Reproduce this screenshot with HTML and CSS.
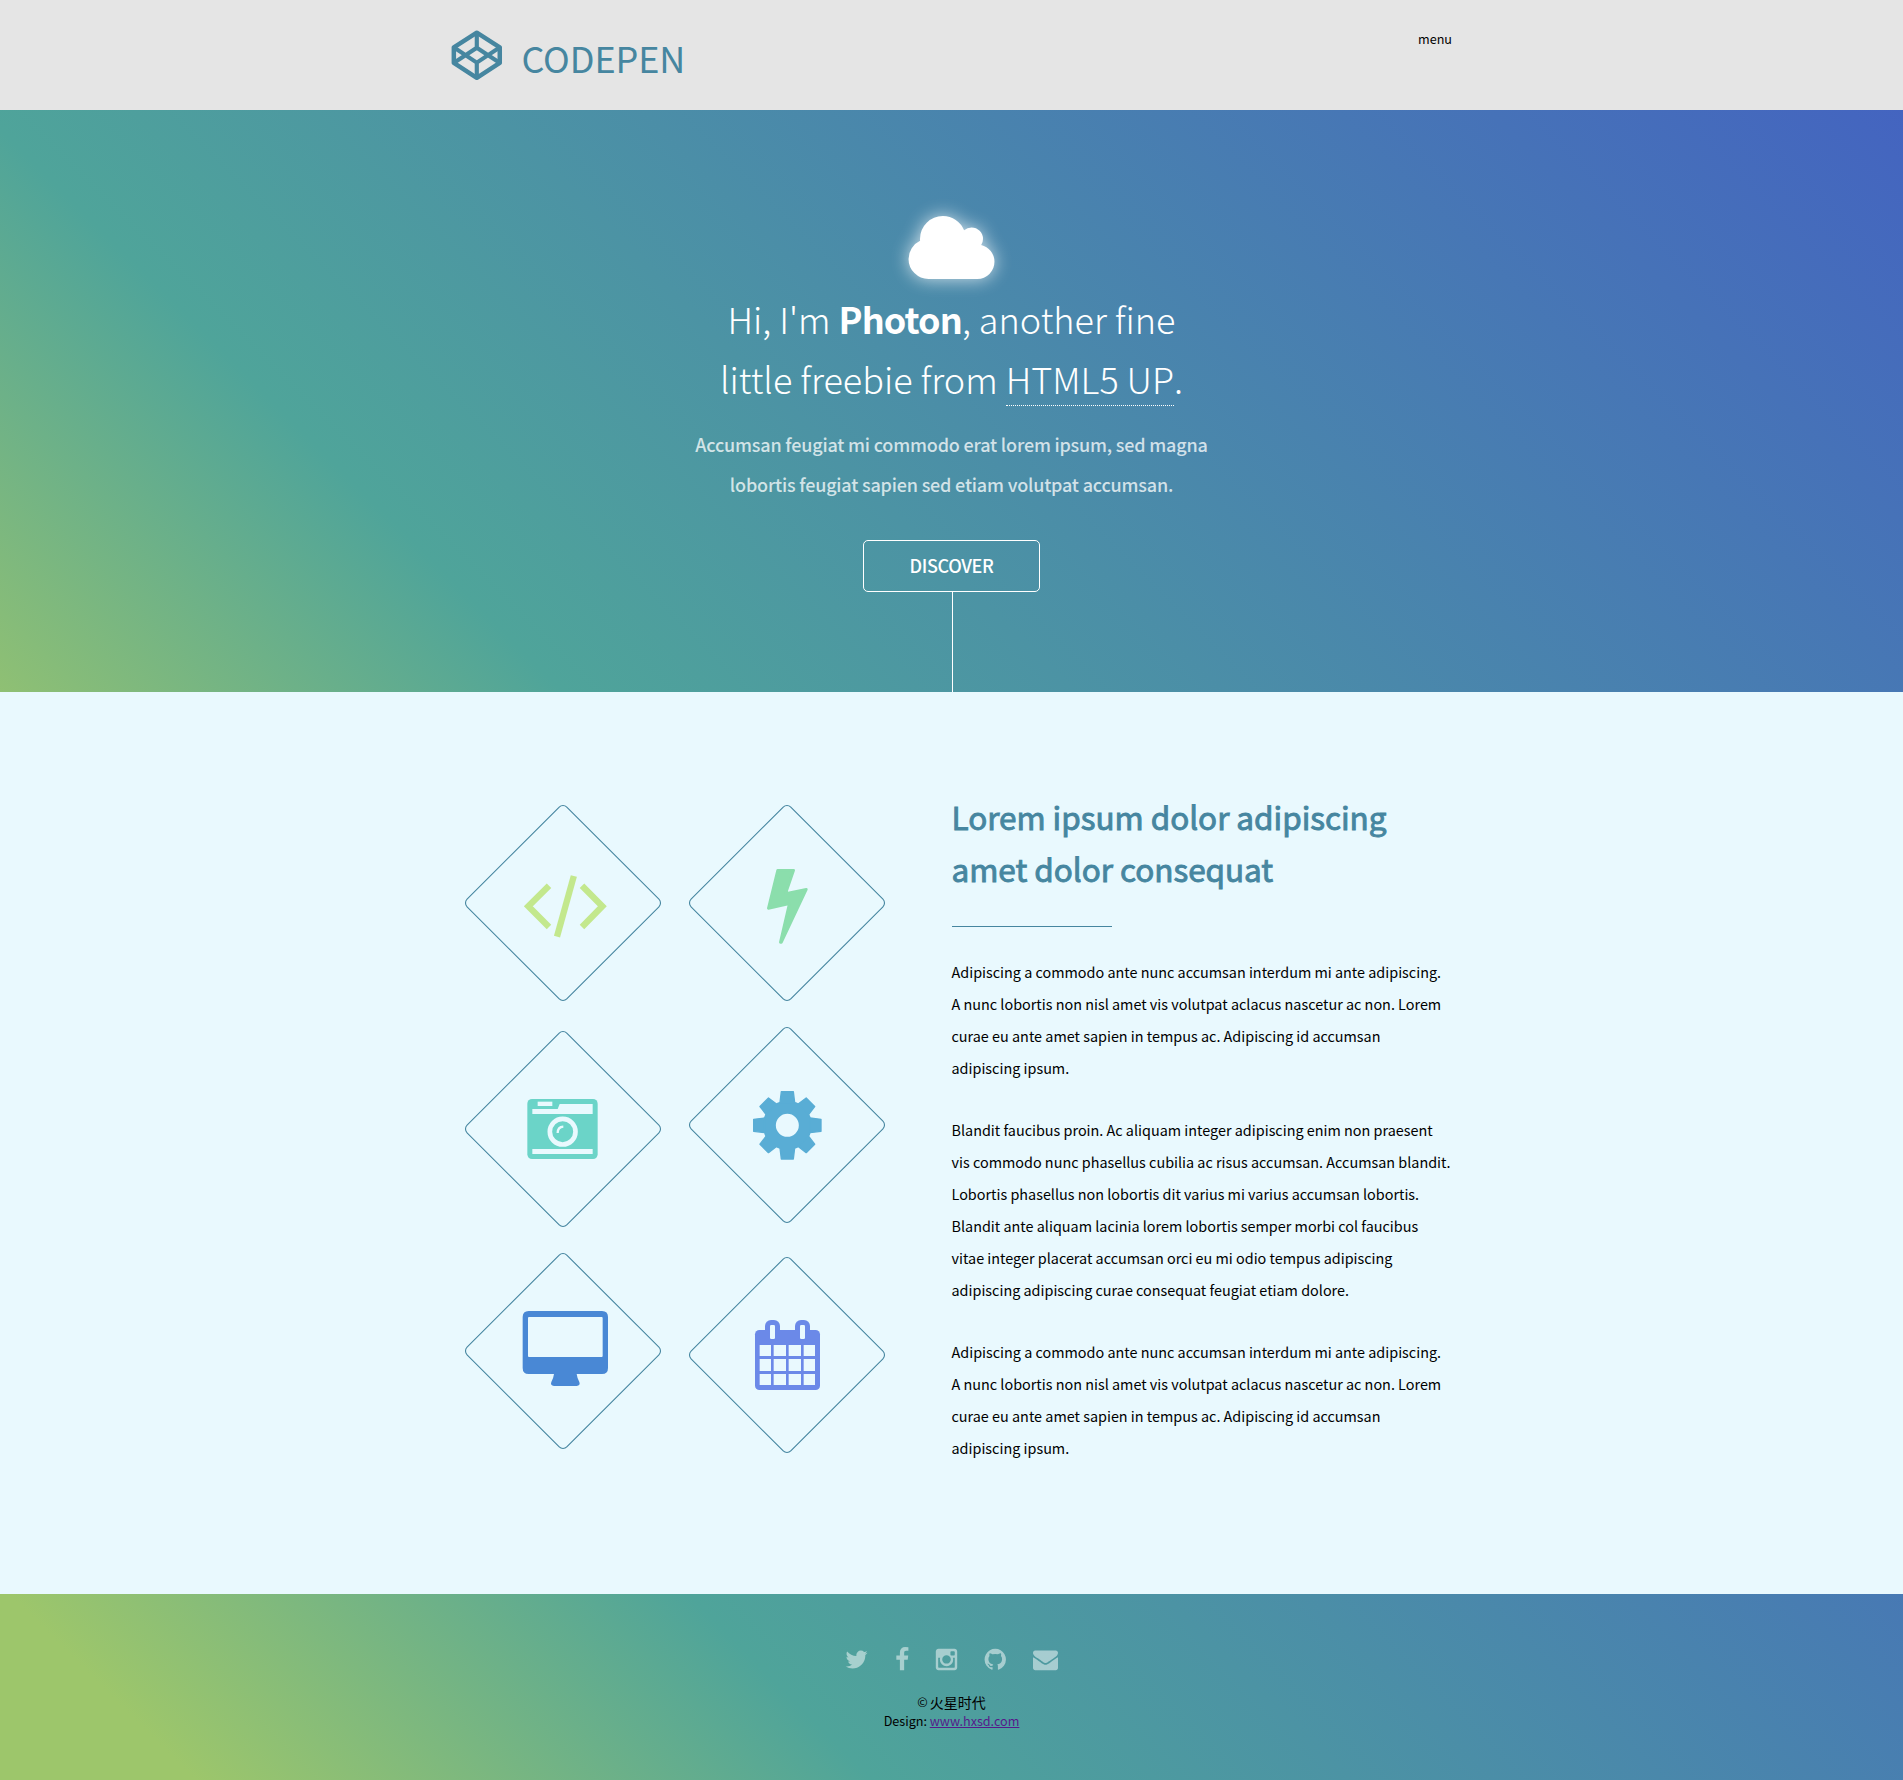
FILE: index.html
```html
<!DOCTYPE html>
<html lang="en">
<head>
<meta charset="utf-8">
<title>Photon</title>
<link rel="stylesheet" href="styles.css">
</head>
<body>
<header class="header">
  <div class="wrap header-row">
    <a class="brand">
      <svg class="brand-mark" viewBox="62 59 155 152"><g fill="none" stroke="currentColor" stroke-width="13.500" stroke-linejoin="round"><path d="M139.500 67 L208.500 111 V158 L139.500 202.500 L70.500 158 V111 Z"/><path stroke-width="12.500" d="M70 111 L139.500 157 L209 111 M70 158 L139.500 112 L209 158 M139.500 67 V112 M139.500 157 V202"/></g></svg>
      <span class="brand-name">CODEPEN</span>
    </a>
    <span class="menu">menu</span>
  </div>
</header>

<section class="hero">
  <svg class="cloud" viewBox="64 128 1920 1408"><path fill="#fff" d="M1984 1152q0 159-112.500 271.500t-271.500 112.500h-1088q-185 0-316.500-131.500t-131.500-316.500q0-132 71-241.500t187-163.500q-2-28-2-43 0-212 150-362t362-150q158 0 286.500 88t187.500 230q70-62 166-62 106 0 181 75t75 181q0 75-41 138 129 30 213 134.500t84 239.500z"/></svg>
  <h1 class="hero-title">Hi, I'm <strong>Photon</strong>, another fine<br>little freebie from <a class="dotted">HTML5 UP</a>.</h1>
  <p class="hero-text">Accumsan feugiat mi commodo erat lorem ipsum, sed magna<br>lobortis feugiat sapien sed etiam volutpat accumsan.</p>
  <a class="button"><span>DISCOVER</span></a>
  <div class="stem"></div>
</section>

<main class="main">
  <div class="wrap columns">
    <div class="tiles">
      <div class="tile-col">
        <svg class="tile" viewBox="3 6 672 666">
          <rect class="diamond" x="127.500" y="127.500" width="423" height="423" rx="16" transform="rotate(45 339 339)"/>
          <g fill="none" stroke="#c3e88d" stroke-width="19"><path d="M297 287 L235 349 L297 411"/><path d="M396 287 L457 349 L396 411"/><path d="M371.500 258 L321 440"/></g>
        </svg>
        <svg class="tile tile-gap-s" viewBox="3 -6 672 666">
          <rect class="diamond" x="127.500" y="115.500" width="423" height="423" rx="16" transform="rotate(45 339 327)"/>
          <rect x="232" y="237" width="211" height="180" rx="14" fill="#6bd4c8"/>
          <g fill="#e9f9fe"><rect x="263" y="245" width="44" height="13"/><path d="M247 267 H323 L329 252 H428 V282 H247 Z"/><rect x="247" y="387" width="181" height="15"/></g>
          <circle cx="338" cy="335" r="38.500" fill="none" stroke="#e9f9fe" stroke-width="14"/>
          <path d="M323 339 Q323 321 340 320" fill="none" stroke="#e9f9fe" stroke-width="7"/>
        </svg>
        <svg class="tile" viewBox="3 0 672 666">
          <rect class="diamond" x="127.500" y="121.500" width="423" height="423" rx="16" transform="rotate(45 339 333)"/>
          <path fill="#4988d5" fill-rule="evenodd" d="M236 213 H456 Q474 213 474 231 V384 Q474 402 456 402 H380 Q381 412 388 426 Q392 437 380 438 H312 Q300 437 304 426 Q311 412 312 402 H236 Q218 402 218 384 V231 Q218 213 236 213 Z M237 231 Q234 231 234 234 V348 Q234 351 237 351 H455 Q458 351 458 348 V234 Q458 231 455 231 Z"/>
        </svg>
      </div>
      <div class="tile-col">
        <svg class="tile" viewBox="675 6 672 666">
          <rect class="diamond" x="799.500" y="127.500" width="423" height="423" rx="16" transform="rotate(45 1011 339)"/>
          <path fill="#8bdeac" stroke="#8bdeac" stroke-width="8" stroke-linejoin="round" d="M983 241 H1031 L1007 311 L1069 298 L994 457 L991 457 L1018 341 L955 355 Z"/>
        </svg>
        <svg class="tile" viewBox="675 -18 672 666">
          <rect class="diamond" x="799.500" y="103.500" width="423" height="423" rx="16" transform="rotate(45 1011 315)"/>
          <g transform="translate(1012 316)" fill="#59add5" stroke="#59add5" stroke-width="4" stroke-linejoin="round">
            <circle r="54" fill="none" stroke-width="39"/>
            <path d="M-18 -101 H18 L22 -68 H-22 Z M-18 101 H18 L22 68 H-22 Z M-101 -18 V18 L-68 22 V-22 Z M101 -18 V18 L68 22 V-22 Z"/>
            <path transform="rotate(45)" d="M-18 -98 H18 L22 -68 H-22 Z M-18 98 H18 L22 68 H-22 Z M-98 -18 V18 L-68 22 V-22 Z M98 -18 V18 L68 22 V-22 Z"/>
          </g>
        </svg>
        <svg class="tile tile-gap-l" viewBox="675 12 672 666">
          <rect class="diamond" x="799.500" y="133.500" width="423" height="423" rx="16" transform="rotate(45 1011 345)"/>
          <g fill="#6b89e8"><rect x="915" y="270" width="195" height="180" rx="13"/><rect x="945" y="240" width="45" height="66" rx="18"/><rect x="1035" y="240" width="45" height="66" rx="18"/></g>
          <g fill="#e9f9fe"><rect x="960" y="255" width="15" height="42" rx="4"/><rect x="1050" y="255" width="15" height="42" rx="4"/>
          <path d="M929 315h34v33h-34z M971 315h37v33h-37z M1016 315h37v33h-37z M1061 315h34v33h-34z M929 357h34v36h-34z M971 357h37v36h-37z M1016 357h37v36h-37z M1061 357h34v36h-34z M929 402h34v33h-34z M971 402h37v33h-37z M1016 402h37v33h-37z M1061 402h34v33h-34z"/></g>
        </svg>
      </div>
    </div>
    <article class="copy">
      <h2 class="copy-title">Lorem ipsum dolor adipiscing<br>amet dolor consequat</h2>
      <div class="rule"></div>
      <p>Adipiscing a commodo ante nunc accumsan interdum mi ante adipiscing.<br>A nunc lobortis non nisl amet vis volutpat aclacus nascetur ac non. Lorem<br>curae eu ante amet sapien in tempus ac. Adipiscing id accumsan<br>adipiscing ipsum.</p>
      <p>Blandit faucibus proin. Ac aliquam integer adipiscing enim non praesent<br>vis commodo nunc phasellus cubilia ac risus accumsan. Accumsan blandit.<br>Lobortis phasellus non lobortis dit varius mi varius accumsan lobortis.<br>Blandit ante aliquam lacinia lorem lobortis semper morbi col faucibus<br>vitae integer placerat accumsan orci eu mi odio tempus adipiscing<br>adipiscing adipiscing curae consequat feugiat etiam dolore.</p>
      <p>Adipiscing a commodo ante nunc accumsan interdum mi ante adipiscing.<br>A nunc lobortis non nisl amet vis volutpat aclacus nascetur ac non. Lorem<br>curae eu ante amet sapien in tempus ac. Adipiscing id accumsan<br>adipiscing ipsum.</p>
    </article>
  </div>
</main>

<footer class="footer">
  <div class="social">
    <svg width="23.2" height="25" viewBox="64 0 1664 1792"><path d="M1684 408q-67 98-162 167 1 14 1 42 0 130-38 259.500t-115.500 248.500-184.500 210.500-258 146-323 54.500q-271 0-496-145 35 4 78 4 225 0 401-138-105-2-188-64.500t-114-159.500q33 5 61 5 43 0 85-11-112-23-185.500-111.500t-73.500-205.500v-4q68 38 146 41-66-44-105-115t-39-154q0-88 44-163 121 149 294.500 238.500t371.500 99.500q-8-38-8-74 0-134 94.500-228.500t228.500-94.500q140 0 236 102 109-21 205-78-37 115-142 178 93-10 186-50z"/></svg>
    <svg width="14.3" height="25" viewBox="384 0 1024 1792"><path d="M1343 12v264h-157q-86 0-116 36t-30 108v189h293l-39 296h-254v759h-306v-759h-255v-296h255v-218q0-186 104-288.500t277-102.500q147 0 228 12z"/></svg>
    <svg width="21.4" height="25" viewBox="142 0 1536 1792"><path d="M1490 1426v-648h-135q20 63 20 131 0 126-64 232.500t-174 168.500-240 62q-197 0-337-135.500t-140-327.500q0-68 20-131h-141v648q0 26 17.500 43.500t43.500 17.500h1069q25 0 43-17.500t18-43.500zm-284-533q0-124-90.500-211.500t-218.500-87.500q-127 0-217.500 87.500t-90.500 211.500 90.500 211.500 217.500 87.500q128 0 218.500-87.500t90.500-211.500zm284-360v-165q0-28-20-48.500t-49-20.500h-174q-29 0-49 20.500t-20 48.500v165q0 29 20 49t49 20h174q29 0 49-20t20-49zm174-208v1142q0 81-58 139t-139 58h-1142q-81 0-139-58t-58-139v-1142q0-81 58-139t139-58h1142q81 0 139 58t58 139z"/></svg>
    <svg width="21.4" height="25" viewBox="160 0 1536 1792"><path d="M896 128q209 0 385.500 103t279.500 279.500 103 385.500q0 251-146.500 451.500t-378.500 277.500q-27 5-40-7t-13-30q0-3 .5-76.500t.5-134.500q0-97-52-142 57-6 102.500-18t94-39 81-66.500 53-105 20.500-150.500q0-119-79-206 37-91-8-204-28-9-81 11t-92 44l-38 24q-93-26-192-26t-192 26q-16-11-42.500-27t-83.500-38.500-85-13.500q-45 113-8 204-79 87-79 206 0 85 20.500 150t52.500 105 80.500 67 94 39 102.500 18q-39 36-49 103-21 10-45 15t-57 5-65.500-21.500-55.500-62.500q-19-32-48.500-52t-49.500-24l-20-3q-21 0-29 4.500t-5 11.500 9 14 13 12l7 5q22 10 43.500 38t31.500 51l10 23q13 38 44 61.500t67 30 69.500 7 55.500-3.500l23-4q0 38 .5 88.500t.5 54.500q0 18-13 30t-40 7q-232-77-378.500-277.500t-146.500-451.500q0-209 103-385.500t279.500-279.500 385.500-103z"/></svg>
    <svg width="25" height="25" viewBox="0 0 1792 1792"><path d="M1792 710v794q0 66-47 113t-113 47h-1472q-66 0-113-47t-47-113v-794q44 49 101 87 362 246 497 345 57 42 92.500 65.500t94.500 48 110 24.500h2q51 0 110-24.500t94.500-48 92.500-65.500q170-123 498-345 57-39 100-87zm0-294q0 79-49 151t-122 123q-376 261-468 325-10 7-42.500 31t-54 38.500-52 32.500-57.500 27-50 9h-2q-23 0-50-9t-57.500-27-52-32.500-54-38.500-42.500-31q-91-64-262-182.500t-205-142.500q-62-42-117-115.500t-55-136.500q0-78 41.500-130t118.500-52h1472q65 0 112.500 47t47.500 113z"/></svg>
  </div>
  <p class="legal">© <span class="han">火星时代</span></p>
  <p class="legal">Design: <a class="link">www.hxsd.com</a></p>
</footer>
</body>
</html>
```
FILE: styles.css
```css
* { box-sizing: border-box; margin: 0; padding: 0; }
body { font-family: "Noto Sans CJK SC", "Open Sans", sans-serif; font-size: 14.4px; color: #000; background: #e9f9fe; }
svg { display: block; overflow: visible; }
.wrap { width: 1001px; margin: 0 auto; }

.header { height: 110px; background: #e5e5e5; }
.header-row { display: flex; justify-content: space-between; }
.brand { display: flex; color: #4686a0; }
.brand-mark { width: 51.6px; height: 50.6px; margin: 30px 18.8px 0 0; }
.brand-name { font-size: 36px; line-height: 114px; letter-spacing: -.1px; }
.menu { font-size: 12.6px; line-height: 77px; }

.hero { height: 582px; padding-top: 106px; display: flex; flex-direction: column; align-items: center; text-align: center; color: #fff; background: linear-gradient(45deg, #9dc66b -85px, #4fa49a 398px, #4361c2 1825px); }
.cloud { width: 87px; height: 63px; filter: drop-shadow(0 0 9px rgba(255, 255, 255, .75)); }
.hero-title { margin-top: 9px; font-size: 36px; line-height: 60px; font-weight: 300; }
.hero-title strong { font-weight: 700; letter-spacing: -.9px; }
.dotted { border-bottom: 1px dotted #fff; display: inline-block; height: 58px; }
.hero-text { margin-top: 16px; font-size: 18px; line-height: 40px; font-weight: 500; letter-spacing: -.19px; color: rgba(255, 255, 255, .75); }
.button { width: 177px; height: 52px; margin-top: 36px; border: 1px solid #fff; border-radius: 5px; font-size: 18px; line-height: 49px; font-weight: 500; letter-spacing: -.35px; }
.stem { width: 1px; height: 100px; margin-left: 1px; background: #fff; }

.main { height: 902px; padding-top: 98px; }
.columns { display: flex; }
.tiles { display: flex; width: 500.5px; padding-top: 2px; }
.tile-col { width: 224px; }
.tile { width: 224px; height: 222px; }
.tile-gap-s { margin-top: 4px; }
.tile-gap-l { margin-top: 8px; }
.diamond { fill: none; stroke: #4686a0; stroke-width: 3.3; }
.copy { width: 500px; white-space: nowrap; }
.copy-title { font-size: 31.5px; line-height: 52px; font-weight: 400; letter-spacing: -.04px; color: #4686a0; -webkit-text-stroke: .9px #4686a0; }
.rule { width: 160px; height: 1px; margin: 32px 0 29px; background: #4686a0; }
.copy p { line-height: 32px; margin-bottom: 30px; }

.footer { height: 186px; padding-top: 53px; text-align: center; background: linear-gradient(45deg, #9dc66b 138px, #4fa49a 617px, #4361c2 1955px); }
.social { display: flex; justify-content: center; gap: 27px; margin-bottom: 20px; fill: rgba(255, 255, 255, .5); }
.legal { font-size: 12.6px; line-height: 19px; }
.han { display: inline-block; margin-left: -1px; height: 19px; padding-top: 1px; font-size: 14px; line-height: 19px; vertical-align: top; }
.link { color: #551a8b; text-decoration: underline; }
```
